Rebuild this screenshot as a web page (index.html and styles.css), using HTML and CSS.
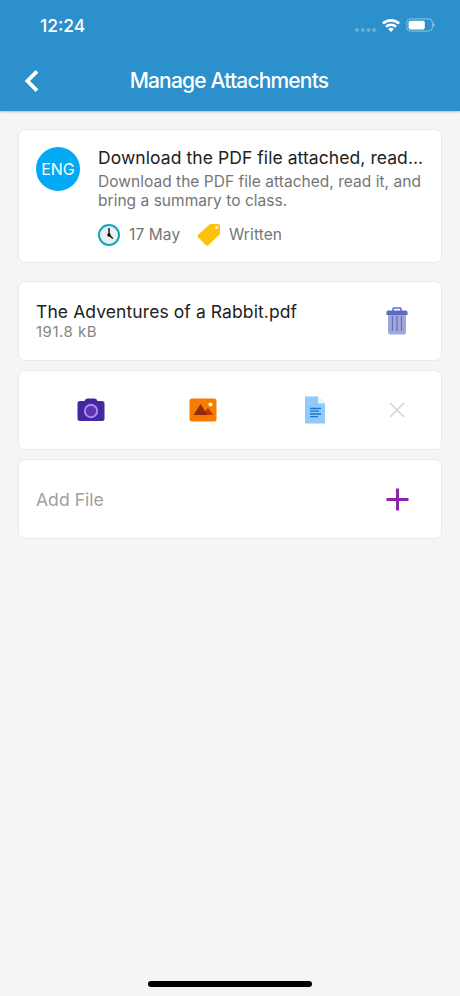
FILE: index.html
```html
<!DOCTYPE html>
<html lang="en">
<head>
<meta charset="utf-8">
<title>Manage Attachments</title>
<link rel="stylesheet" href="styles.css">
</head>
<body>
<div class="screen">
  <header class="header">
    <div class="status">
      <span class="time">12:24</span>
      <svg class="indicators" width="82" height="18" viewBox="0 0 82 18">
        <g fill="#66afd9"><circle cx="4" cy="13" r="2"/><circle cx="9.8" cy="13" r="2"/><circle cx="15.5" cy="13" r="2"/><circle cx="21" cy="13" r="2"/></g>
        <g fill="none" stroke="#fff" stroke-width="2.6"><path d="M29.9 6.7a11.5 11.5 0 0 1 16.2 0"/><path d="M33 9.9a7 7 0 0 1 10 0"/></g>
        <path fill="#fff" d="M35.2 12.1a4 4 0 0 1 5.600 0L38 15z"/>
        <rect x="53.8" y="1.900" width="25.600" height="12.200" rx="3.600" fill="none" stroke="#8dc4e4"/>
        <rect x="55.600" y="3.700" width="16.200" height="8.800" rx="1.800" fill="#fff"/>
        <path fill="#8dc4e4" d="M80.400 6q1.600 .4 1.600 2t-1.600 2z"/>
      </svg>
    </div>
    <div class="nav">
      <svg class="back" width="16" height="24" viewBox="0 0 16 24"><path d="M13 2.400 3.400 12 13 21.600" fill="none" stroke="#fff" stroke-width="3.800"/></svg>
      <h1 class="title">Manage Attachments</h1>
    </div>
  </header>
  <main class="content">
    <section class="card task">
      <div class="avatar">ENG</div>
      <div class="details">
        <h2 class="task-title">Download the PDF file attached, read...</h2>
        <p class="description">Download the PDF file attached, read it, and<br>bring a summary to class.</p>
        <div class="meta">
          <svg width="22" height="22" viewBox="0 0 22 22"><circle cx="11" cy="11" r="10" fill="#eceff1" stroke="#10a8b8" stroke-width="2"/><path d="M11 4v7l3.800 3.600" fill="none" stroke="#111" stroke-width="1.400"/><circle cx="11" cy="11" r="1.700"/></svg>
          <span class="date">17 May</span>
          <svg width="24" height="24" viewBox="0 0 24 24"><path fill="#ffc107" d="M12 1.800Q13 .9 14.400.9H21Q23 .9 23 2.900V9.500Q23 11 22 12L11.400 22.300Q10.200 23.400 9 22.300L1 14.300Q0 13.200 1 12Z"/><circle cx="19.600" cy="4.400" r="1.500" fill="#fff8d8"/></svg>
          <span class="kind">Written</span>
        </div>
      </div>
    </section>
    <section class="card row">
      <div><div class="file-name">The Adventures of a Rabbit.pdf</div><div class="file-size">191.8 kB</div></div>
      <svg class="trash" width="22" height="28" viewBox="0 0 22 28"><path d="M7 4V1.800Q7 1 7.800 1h6.400q.8 0 .8.8V4" fill="none" stroke="#5c6bc0" stroke-width="1.500"/><path fill="#9fa8da" d="M2 7h18v18q0 2.500-2.500 2.500h-13Q2 27.500 2 25z"/><path d="M6.500 9v15M11 9v15M15.500 9v15" stroke="#6673c4" stroke-width="1.300"/><path fill="#5c6bc0" d="M2 3.500h18q1.500 0 1.500 2V8H.5V5.500q0-2 1.500-2z"/></svg>
    </section>
    <section class="card sources">
      <svg width="28" height="24" viewBox="0 0 28 24"><path fill="#4527a0" d="M3 3h4.500Q8 .5 10.500.5h7q2.500 0 3 2.500H25q2.500 0 2.500 2.500v15q0 2.500-2.500 2.500H3Q.5 23 .5 20.500v-15Q.5 3 3 3z"/><circle cx="14" cy="13" r="6.200" fill="#5e35b1" stroke="#b388ff" stroke-width="1.900"/></svg>
      <svg width="28" height="24" viewBox="0 0 28 24"><rect x=".5" y=".5" width="27" height="23" rx="2.500" fill="#f57c00"/><circle cx="21.500" cy="6.500" r="2.100" fill="#fff9c4"/><path fill="#bf360c" d="m13 17 6-7 5.500 7z"/><path fill="#942a09" d="m4.500 17 7-11 7 11z"/></svg>
      <svg width="22" height="28" viewBox="0 0 22 28"><path fill="#90caf9" d="M1 .5h13l7 7v20H1z"/><path fill="#e1f5fe" d="M14 .5v7h7z"/><path d="M6 12.500h11M6 15.200h9M6 18h11M6 20.700h8" stroke="#1976d2" stroke-width="1.300"/></svg>
      <svg width="16" height="16" viewBox="0 0 16 16"><path d="m1 1 14 14M15 1 1 15" stroke="#d5d5d5" stroke-width="1.600"/></svg>
    </section>
    <section class="card row">
      <span class="add-label">Add File</span>
      <svg class="plus" width="23" height="23" viewBox="0 0 23 23"><path d="M11.500.5v22M.5 11.500h22" stroke="#8e24aa" stroke-width="3"/></svg>
    </section>
  </main>
  <div class="home-bar"></div>
</div>
</body>
</html>
```

FILE: styles.css
```css
* { box-sizing: border-box; margin: 0; padding: 0; }
body { background: #f5f5f5; font-family: Inter, "Liberation Sans", sans-serif; font-weight: 400; }
svg { display: block; flex: none; }
.screen { display: flex; flex-direction: column; width: 460px; height: 996px; }
.header { height: 111px; background: #2b90cc; color: #fff; box-shadow: 0 1px 2px rgba(0, 0, 0, .25); }
.status { display: flex; justify-content: space-between; align-items: center; height: 50px; padding: 1px 25px 0 40px; }
.time { font-size: 17.500px; font-weight: 500; line-height: 20px; }
.nav { display: grid; grid-template-columns: 98px 262px 100px; align-items: center; height: 61px; }
.back { margin-left: 24px; }
.title { text-align: center; font-size: 21px; font-weight: 500; line-height: 26px; letter-spacing: -.82px; white-space: nowrap; }
.content { flex: 1; display: flex; flex-direction: column; gap: 9px; padding: 18px 18px 0; }
.card { background: #fff; border: 1px solid #eaeaea; border-radius: 7px; white-space: nowrap; }
.task { display: flex; height: 134px; padding: 17px; margin-bottom: 9px; }
.avatar { width: 44px; height: 44px; flex: none; border-radius: 50%; background: #03a9f4; color: #fff; font-size: 16px; line-height: 44px; text-align: center; }
.details { margin-left: 18px; }
.task-title { font-size: 17.500px; font-weight: 400; line-height: 22px; color: #212121; letter-spacing: .07px; }
.description { margin-top: 3px; font-size: 15.500px; line-height: 19px; color: #757575; letter-spacing: .03px; }
.meta { display: flex; align-items: center; height: 24px; margin-top: 12.500px; font-size: 15.500px; color: #757575; letter-spacing: .1px; }
.date { margin-left: 9px; width: 68px; }
.kind { margin-left: 8px; }
.row { display: flex; align-items: center; justify-content: space-between; height: 80px; padding: 0 32px 0 17px; }
.file-name { font-size: 17.500px; line-height: 22px; color: #212121; letter-spacing: .09px; }
.file-size { font-size: 15px; line-height: 18px; color: #858585; letter-spacing: .5px; }
.trash { margin-right: 1px; }
.sources { display: grid; grid-template-columns: 111px 113px 111px 53px; justify-items: center; align-items: center; height: 80px; padding-left: 16px; }
.add-label { font-size: 17.500px; color: #a0a0a0; letter-spacing: .05px; }
.home-bar { width: 164px; height: 6px; margin: 0 auto 9px; border-radius: 3px; background: #000; }
```
